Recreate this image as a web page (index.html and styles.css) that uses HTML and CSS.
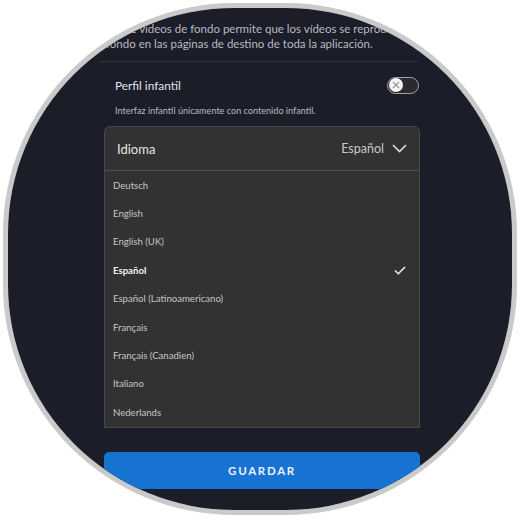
FILE: index.html
```html
<!DOCTYPE html>
<html lang="es">
<head>
    <meta charset="UTF-8">
    <title>Perfil - Idioma</title>
    <link rel="stylesheet" href="styles.css">
</head>
<body>
    <div class="lens">
        <div class="screen">
            <p class="desc intro">La reproducción automática de vídeos de fondo permite que los vídeos se reproduzcan<br>fondo en las páginas de destino de toda la aplicación.</p>

            <div class="setting">
                <div class="setting-row">
                    <span class="setting-title">Perfil infantil</span>
                    <span class="toggle">
                        <span class="knob">
                            <svg width="10" height="10" viewBox="0 0 10 10"><path d="M2 2 L8 8 M8 2 L2 8" stroke="#9a9aa0" stroke-width="1.2" fill="none"/></svg>
                        </span>
                    </span>
                </div>
                <p class="desc">Interfaz infantil únicamente con contenido infantil.</p>
            </div>

            <div class="select">
                <div class="select-head">
                    <span class="select-label">Idioma</span>
                    <span class="select-value">Español
                        <svg width="15" height="9" viewBox="0 0 15 9"><polyline points="1,1 7.5,7.5 14,1" stroke="#dcdcdc" stroke-width="1.6" fill="none"/></svg>
                    </span>
                </div>
                <ul class="options">
                    <li>Deutsch</li>
                    <li>English</li>
                    <li>English (UK)</li>
                    <li class="selected">Español
                        <svg width="12" height="9" viewBox="0 0 12 9"><polyline points="1,4.5 4.3,7.8 11,1" stroke="#f0f0f0" stroke-width="1.5" fill="none"/></svg>
                    </li>
                    <li>Español (Latinoamericano)</li>
                    <li>Français</li>
                    <li>Français (Canadien)</li>
                    <li>Italiano</li>
                    <li>Nederlands</li>
                </ul>
            </div>

            <button class="save">GUARDAR</button>
        </div>
    </div>
</body>
</html>
```

FILE: styles.css
```css
:root {
    --bg: #1b1d29;
    --panel: #323232;
    --line: #34363f;
    --blue: #1673d2;
    --text: #e6e6e8;
    --muted: #b9bac0;
}

body {
    margin: 0;
    background: #fff;
    font-family: Lato, 'Open Sans', sans-serif;
}

/* round magnifier frame around the screenshot */
.lens {
    width: 504px;
    height: 502px;
    margin: 3px 0 0 3px;
    border: 5px solid #cacaca;
    border-radius: 45%;
    overflow: hidden;
}

.screen {
    height: 100%;
    background: var(--bg);
    padding: 13px 0 0 96px;
    box-sizing: border-box;
}

.desc {
    margin: 0;
    font-size: 9.1px;
    line-height: 15px;
    color: var(--muted);
    white-space: nowrap;
}

.intro {
    font-size: 11.5px;
    margin-left: -4px;
    padding: 0 0 10px 6px;
    width: 312px;
    text-indent: -125px;
    border-bottom: 1px solid var(--line);
}

.setting {
    padding: 12px 0 0 11px;
    width: 305px;
}

.setting-row {
    display: flex;
    align-items: center;
    justify-content: space-between;
    height: 22px;
}

.setting-title {
    font-size: 11.8px;
    color: var(--text);
}

.toggle {
    width: 28px;
    height: 15px;
    border: 1.5px solid #a4a4a8;
    border-radius: 10px;
    background: #2a2a30;
    display: flex;
    align-items: center;
    padding: 0 1px;
    margin-right: 1px;
}

.knob {
    width: 14px;
    height: 14px;
    border-radius: 50%;
    background: #f4f4f4;
    display: flex;
    align-items: center;
    justify-content: center;
}

.setting .desc {
    margin-top: 7px;
}

.select {
    margin-top: 8px;
    width: 314px;
    background: var(--panel);
    border: 1px solid #45464e;
    border-radius: 6px 6px 0 0;
}

.select-head {
    display: flex;
    align-items: center;
    justify-content: space-between;
    height: 43px;
    padding: 0 12px 0 12px;
    border-bottom: 1px solid #4c4d56;
}

.select-label {
    font-size: 13px;
    color: var(--text);
}

.select-value {
    display: flex;
    align-items: center;
    gap: 8px;
    font-size: 12.5px;
    color: #c9c9cb;
}

.options {
    list-style: none;
    margin: 0;
    padding: 0;
}

.options li {
    height: 28.4px;
    display: flex;
    align-items: center;
    justify-content: space-between;
    padding: 0 13px 0 8px;
    font-size: 9.6px;
    color: #c6c6c8;
}

.options li.selected {
    font-weight: bold;
    color: #f2f2f2;
}

.save {
    display: block;
    margin-top: 24px;
    width: 316px;
    height: 37px;
    border: none;
    border-radius: 5px;
    background: var(--blue);
    color: #eaf2ff;
    font-family: Lato, sans-serif;
    font-size: 11.5px;
    font-weight: bold;
    letter-spacing: 1.7px;
}
```
